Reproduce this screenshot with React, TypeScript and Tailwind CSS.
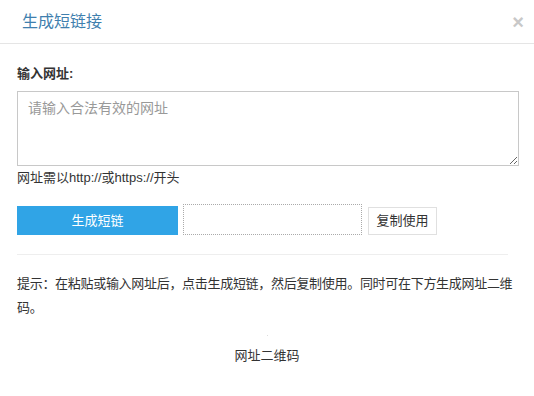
import type { FC } from 'react';

const App: FC = () => {
  return (
    <div
      className="w-[534px] h-[396px] bg-white text-[#333] overflow-hidden"
      style={{ fontFamily: '"Liberation Sans", "Noto Sans CJK SC", sans-serif' }}
    >
      <div className="h-[44px] flex items-center justify-between pl-[22px] pr-[10px] border-b border-[#e5e5e5]">
        <span className="text-[16px] text-[#3f7fae]">生成短链接</span>
        <span className="text-[20px] font-bold text-[#c8c8c8] leading-none">×</span>
      </div>

      <div className="px-[17px] pt-[20px]">
        <div className="text-[13px] font-bold leading-[20px]">输入网址:</div>
        <textarea
          className="mt-[7px] block w-[502px] h-[75px] border border-[#c8c8c8] px-[10px] py-[6px] text-[14px] outline-none placeholder:text-[#999]"
          placeholder="请输入合法有效的网址"
        />
        <div className="text-[13px] leading-[22px] mt-[1px]">网址需以http://或https://开头</div>

        <div className="flex items-center mt-[17px]">
          <button className="w-[161px] h-[29px] bg-[#30a4e6] text-white text-[13px]">生成短链</button>
          <div className="ml-[5px] w-[179px] h-[31px] border border-dotted border-[#aaa] -mt-[3px]" />
          <button className="ml-[6px] w-[69px] h-[28px] border border-[#e0e0e0] bg-white text-[13px] text-[#333]">
            复制使用
          </button>
        </div>

        <div className="mt-[19px] w-[491px] border-t border-[#eee]" />

        <p className="mt-[17px] text-[13px] leading-[24px] tracking-[-0.3px] w-[500px]">
          提示：在粘贴或输入网址后，点击生成短链，然后复制使用。同时可在下方生成网址二维码。
        </p>

        <div className="flex flex-col items-center mt-[15px] w-[500px]">
          <div className="w-[1px] h-[1px] bg-[#ddd]" />
          <div className="mt-[10px] text-[13px] leading-[20px]">网址二维码</div>
        </div>
      </div>
    </div>
  );
};

export default App;
